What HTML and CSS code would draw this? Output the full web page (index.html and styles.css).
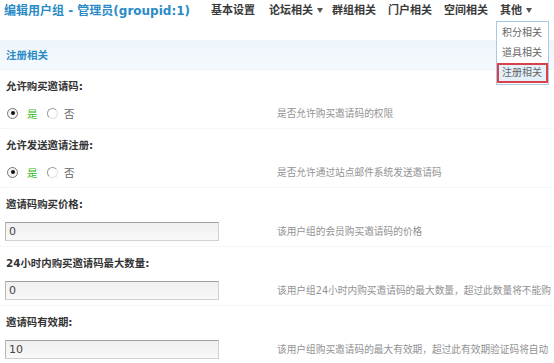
FILE: index.html
```html
<!DOCTYPE html>
<html lang="zh-CN">
<head>
<meta charset="utf-8">
<title>编辑用户组</title>
<link rel="stylesheet" href="styles.css">
</head>
<body>
<div class="page">
  <div class="topbar">
    <h1 class="title">编辑用户组 - 管理员(groupid:1)</h1>
    <ul class="nav">
      <li class="nav-item">基本设置</li>
      <li class="nav-item has-arrow">论坛相关<span class="arrow"></span></li>
      <li class="nav-item">群组相关</li>
      <li class="nav-item">门户相关</li>
      <li class="nav-item">空间相关</li>
      <li class="nav-item has-arrow other">其他<span class="arrow"></span>
        <ul class="dropdown">
          <li class="dd-item">积分相关</li>
          <li class="dd-item">道具相关</li>
          <li class="dd-item active">注册相关</li>
        </ul>
      </li>
    </ul>
  </div>

  <div class="section-head">注册相关</div>

  <div class="block">
    <div class="label">允许购买邀请码:</div>
    <div class="row">
      <div class="field">
        <label class="opt"><span class="radio checked"></span><span class="yes">是</span></label>
        <label class="opt"><span class="radio"></span><span class="no">否</span></label>
      </div>
      <div class="tip">是否允许购买邀请码的权限</div>
    </div>
  </div>

  <div class="block">
    <div class="label">允许发送邀请注册:</div>
    <div class="row">
      <div class="field">
        <label class="opt"><span class="radio checked"></span><span class="yes">是</span></label>
        <label class="opt"><span class="radio"></span><span class="no">否</span></label>
      </div>
      <div class="tip">是否允许通过站点邮件系统发送邀请码</div>
    </div>
  </div>

  <div class="block">
    <div class="label">邀请码购买价格:</div>
    <div class="row">
      <div class="field"><input class="txt" type="text" value="0"></div>
      <div class="tip">该用户组的会员购买邀请码的价格</div>
    </div>
  </div>

  <div class="block">
    <div class="label">24小时内购买邀请码最大数量:</div>
    <div class="row">
      <div class="field"><input class="txt" type="text" value="0"></div>
      <div class="tip">该用户组24小时内购买邀请码的最大数量，超过此数量将不能购</div>
    </div>
  </div>

  <div class="block">
    <div class="label">邀请码有效期:</div>
    <div class="row">
      <div class="field"><input class="txt" type="text" value="10"></div>
      <div class="tip">该用户组购买邀请码的最大有效期，超过此有效期验证码将自动</div>
    </div>
  </div>
</div>
</body>
</html>
```

FILE: styles.css
```css
html, body {
  margin: 0;
  padding: 0;
  background: #fff;
}
body {
  width: 554px;
  height: 363px;
  overflow: hidden;
  font-family: "DejaVu Sans", "Noto Sans CJK SC", sans-serif;
  font-size: 12px;
  color: #333;
}
ul { list-style: none; margin: 0; padding: 0; }

.topbar {
  display: flex;
  align-items: center;
  height: 21px;
  padding-left: 4px;
  margin-bottom: 19px;
}
.title {
  margin: 0;
  font-size: 12px;
  font-weight: bold;
  color: #2a8bc7;
  line-height: 20px;
  white-space: nowrap;
  width: 207px;
}
.nav {
  display: flex;
  align-items: center;
}
.nav-item {
  position: relative;
  font-weight: bold;
  color: #3a3a3a;
  line-height: 20px;
  white-space: nowrap;
  margin-right: 12px;
  font-size: 11px;
}
.nav-item:first-child { margin-right: 14px; }
.nav-item.has-arrow { margin-right: 9px; }
.arrow {
  display: inline-block;
  width: 0;
  height: 0;
  border-left: 3px solid transparent;
  border-right: 3px solid transparent;
  border-top: 5px solid #555;
  margin-left: 4px;
  vertical-align: 1px;
}
.dropdown {
  position: absolute;
  top: 20px;
  left: -4px;
  width: 51px;
  border: 1px solid #a9c9e2;
  background: #fff;
  padding: 1px 0;
  z-index: 5;
}
.dd-item {
  font-weight: normal;
  color: #666;
  line-height: 20px;
  height: 20px;
  padding-left: 5px;
  font-size: 10px;
  box-sizing: border-box;
}
.dd-item.active {
  border: 2px solid #d8434b;
  background: #e4f0fa;
  line-height: 16px;
  padding-left: 3px;
}

.section-head {
  height: 30px;
  line-height: 30px;
  padding-left: 6px;
  background: linear-gradient(#eff6fb, #f4f9fd);
  color: #2a8bc7;
  font-weight: bold;
  font-size: 10.5px;
}

.block {
  border-top: 1px dotted #e6eff7;
  margin-top: -1px;
}
.block:first-of-type { border-top: none; }
.label {
  padding: 7px 6px 0;
  line-height: 18px;
  font-weight: bold;
  font-size: 10.4px;
  color: #333;
  white-space: nowrap;
}
.row {
  display: grid;
  grid-template-columns: 277px 277px;
  padding: 7px 0 5px;
  height: 22px;
  align-items: center;
  overflow: hidden;
}
.field {
  padding-left: 5px;
  display: flex;
  align-items: center;
}
.opt {
  display: inline-flex;
  align-items: center;
}
.radio {
  display: inline-block;
  width: 9px;
  height: 9px;
  border-radius: 50%;
  border: 1px solid #9a9a9a;
  border-right-color: #e0e0e0;
  border-bottom-color: #e0e0e0;
  background: #fff;
  margin-left: 2px;
  margin-right: 9px;
  position: relative;
}
.radio.checked {
  border-color: #777;
  background: #f4f4f4;
}
.radio.checked::after {
  content: "";
  position: absolute;
  left: 2.5px;
  top: 2.5px;
  width: 4px;
  height: 4px;
  border-radius: 50%;
  background: #111;
}
.yes { color: #33bb22; width: 16px; font-size: 10.5px; }
.no { color: #666; font-size: 10.5px; }
.opt + .opt .radio { margin-left: 4px; margin-right: 6px; }
.txt {
  box-sizing: border-box;
  width: 214px;
  height: 19px;
  margin: 0;
  padding: 0 3px;
  border: 1px solid #d0d0d0;
  border-top-color: #a0a0a0;
  border-left-color: #b8b8b8;
  background: linear-gradient(#f0f0f0, #f8f8f8);
  font-family: "DejaVu Sans", "Noto Sans CJK SC", sans-serif;
  font-size: 11px;
  color: #444;
  outline: none;
}
.tip {
  color: #929292;
  white-space: nowrap;
  overflow: hidden;
  font-size: 9.7px;
}
```
